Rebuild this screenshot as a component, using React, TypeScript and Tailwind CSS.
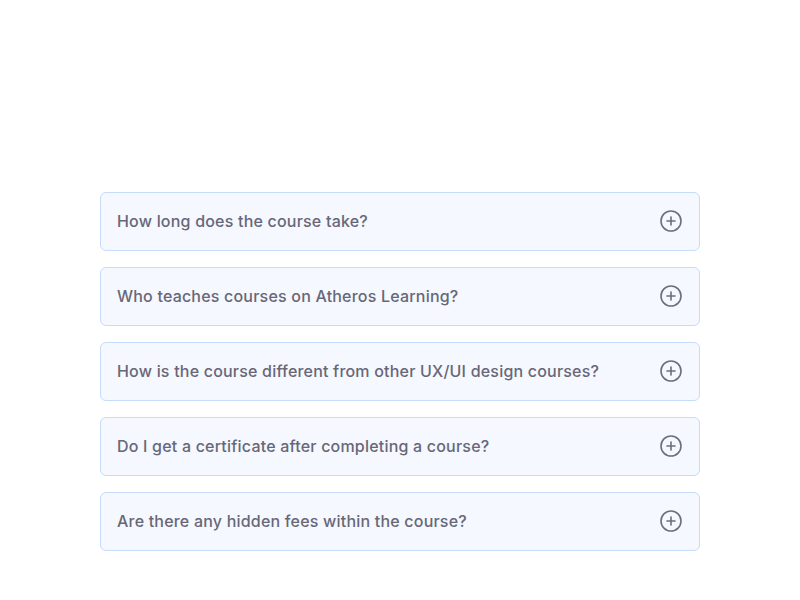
import React from 'react';
import { CirclePlus } from 'lucide-react';

const questions = [
  'How long does the course take?',
  'Who teaches courses on Atheros Learning?',
  'How is the course different from other UX/UI design courses?',
  'Do I get a certificate after completing a course?',
  'Are there any hidden fees within the course?'
];

export default function App() {
  return <div className="min-h-screen bg-white pt-[192px]" style={{ fontFamily: 'Inter, "Noto Sans", sans-serif' }}>
      <div className="mx-auto flex w-[600px] flex-col gap-4">
        {questions.map(q => <button key={q} className="flex h-[59px] items-center justify-between rounded-md border border-[#c5dcfa] bg-[#f5f8fe] px-4 pb-px text-left">
            <span className="text-[16px] font-medium tracking-[0.2px] text-[#676778]">{q}</span>
            <CirclePlus size={24} strokeWidth={1.6} className="text-[#6b6f7b]" />
          </button>)}
      </div>
    </div>;
}
